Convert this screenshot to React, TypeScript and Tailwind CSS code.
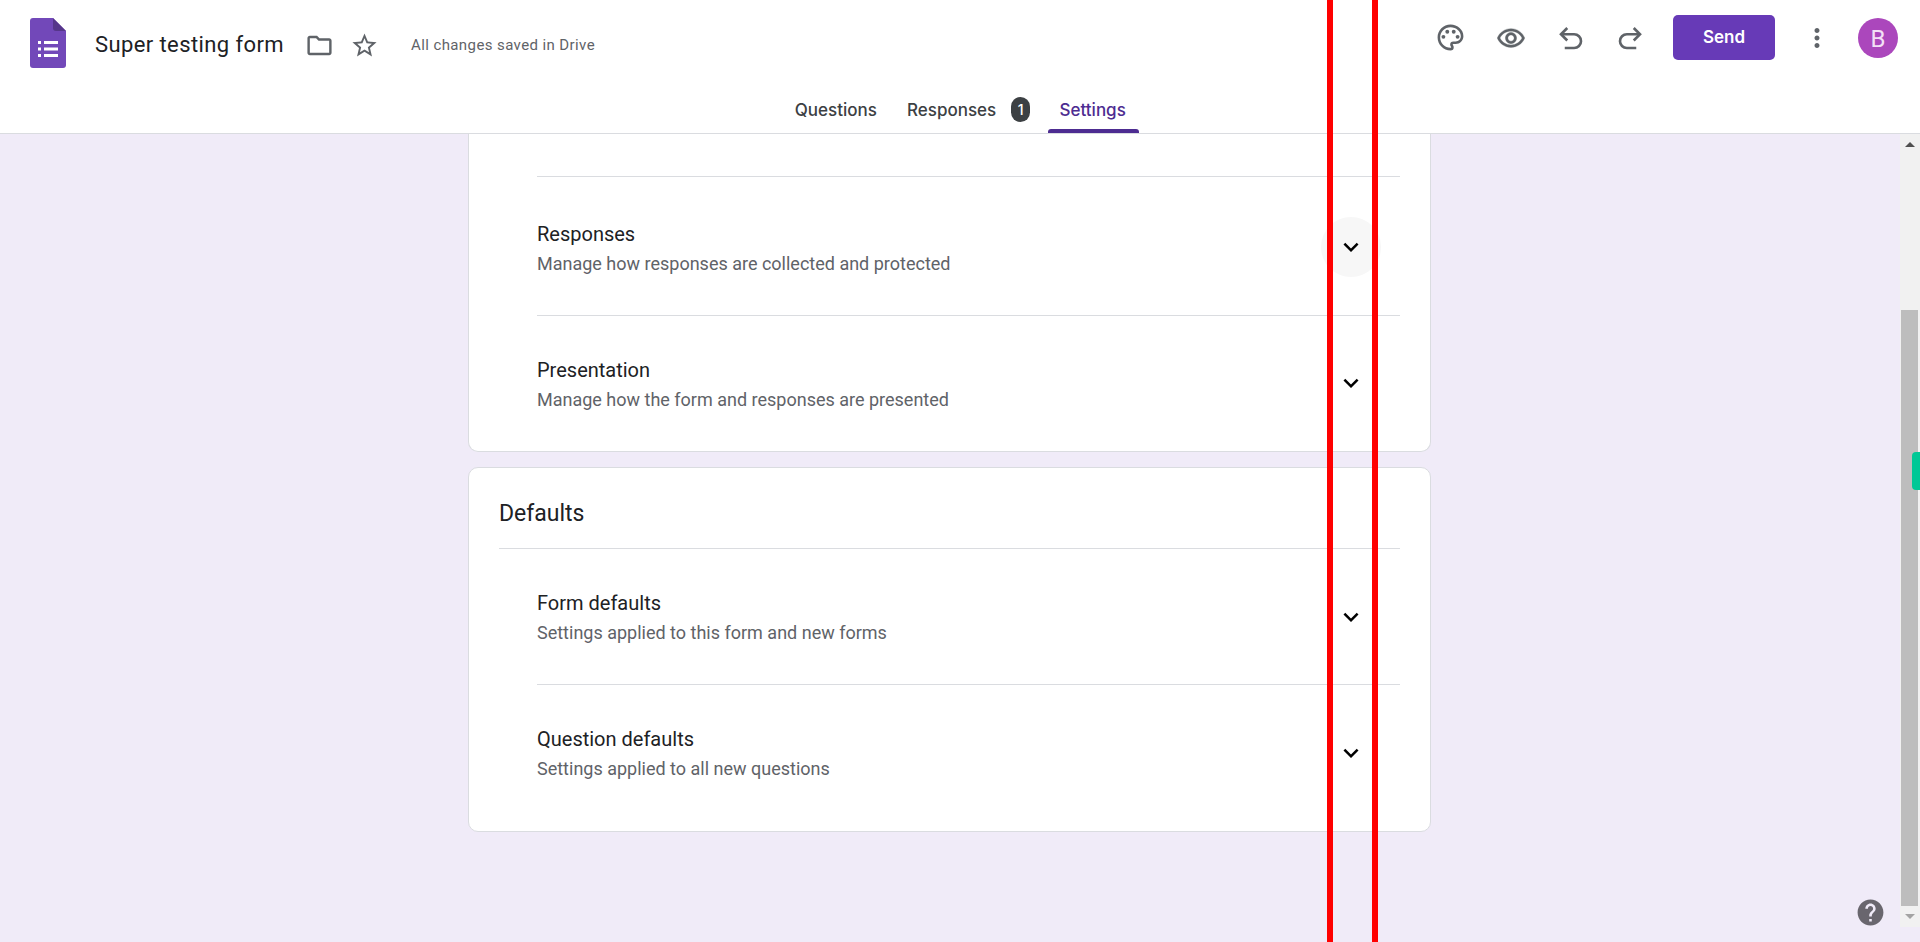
import { MdOutlinePalette, MdMoreVert, MdOutlineFolder, MdStarBorder, MdExpandMore, MdHelp } from "react-icons/md";

function Row({ title, sub, hover, last, rowH, pad, chev }: { title: string; sub: string; hover?: boolean; last?: boolean; rowH: string; pad: string; chev?: string }) {
  return (
    <div className={`ml-[38px] ${rowH} flex items-center ${last ? "" : "border-b border-[#dadce0]"}`}>
      <div className={`flex-1 ${pad}`}>
        <div className="text-[20px] leading-[26px] text-[#202124]">{title}</div>
        <div className="text-[18px] leading-[24px] mt-[5px] text-[#5f6368]">{sub}</div>
      </div>
      <div className={`w-[60px] h-[60px] mr-[19px] rounded-full flex items-center justify-center text-black ${hover ? "bg-[#f7f7f7] mt-[2px]" : ""} ${chev ?? ""}`}>
        <MdExpandMore size={30} />
      </div>
    </div>
  );
}

export default function App() {
  return (
    <div className="relative h-[942px] overflow-hidden flex flex-col bg-[#f0ebf8] font-['Roboto',sans-serif]">
      <header className="h-[134px] shrink-0 bg-white border-b border-[#dadce0] flex flex-col">
        <div className="h-[90px] flex items-center">
          <svg width="36" height="50" viewBox="0 0 36 50" className="ml-[30px] mb-[4px] shrink-0">
            <path d="M3 0H23L36 13V47a3 3 0 0 1-3 3H3a3 3 0 0 1-3-3V3a3 3 0 0 1 3-3Z" fill="#7248b9" />
            <path d="M23 0L36 13H26a3 3 0 0 1-3-3Z" fill="#56368a" />
            <g fill="#fff">
              <rect x="8" y="23" width="3" height="3" />
              <rect x="8" y="29.5" width="3" height="3" />
              <rect x="8" y="36" width="3" height="3" />
              <rect x="14" y="23" width="14" height="3" />
              <rect x="14" y="29.5" width="14" height="3" />
              <rect x="14" y="36" width="14" height="3" />
            </g>
          </svg>
          <div className="ml-[29px] mb-[2px] text-[22px] text-[#202124] tracking-[0.4px]">Super testing form</div>
          <MdOutlineFolder size={29} className="ml-[21px] text-[#5f6368]" />
          <MdStarBorder size={29} className="ml-[16px] text-[#5f6368]" />
          <div className="ml-[32px] text-[15px] tracking-[0.4px] text-[#5f6368]">All changes saved in Drive</div>
          <div className="ml-auto mb-[15px] flex items-center text-[#5f6368]">
            <MdOutlinePalette size={31} />
            <svg width="30" height="30" viewBox="0 0 24 24" fill="currentColor" stroke="currentColor" strokeWidth="0.25" className="ml-[30px]">
              <path d="M12 6.5c3.79 0 7.17 2.13 8.82 5.5-1.65 3.37-5.02 5.5-8.82 5.5S4.83 15.37 3.18 12C4.83 8.63 8.21 6.5 12 6.5m0-2C7 4.5 2.73 7.61 1 12c1.73 4.39 6 7.5 11 7.5s9.27-3.11 11-7.5c-1.73-4.39-6-7.5-11-7.5zm0 5c1.38 0 2.5 1.12 2.5 2.5s-1.12 2.5-2.5 2.5-2.5-1.12-2.5-2.5 1.12-2.5 2.5-2.5m0-2c-2.48 0-4.5 2.02-4.5 4.5s2.02 4.5 4.5 4.5 4.5-2.02 4.5-4.5-2.02-4.5-4.5-4.5z" />
            </svg>
            <svg width="30" height="30" viewBox="0 0 24 24" fill="none" stroke="currentColor" strokeWidth="2.1" className="ml-[30px]">
              <path d="M9 14 4 9l5-5" />
              <path d="M4 9h10.5a5.5 5.5 0 0 1 0 11H7" />
            </svg>
            <svg width="30" height="30" viewBox="0 0 24 24" fill="none" stroke="currentColor" strokeWidth="2.1" className="ml-[29px]">
              <path d="M15 14l5-5-5-5" />
              <path d="M20 9H9.5a5.5 5.5 0 0 0 0 11H17" />
            </svg>
            <div className="ml-[28px] w-[102px] h-[45px] rounded-[5px] bg-[#673ab7] text-white text-[17px] font-semibold flex items-center justify-center font-['Inter',sans-serif]">Send</div>
            <MdMoreVert size={30} className="ml-[27px]" />
            <div className="ml-[26px] mr-[22px] mt-[1px] pt-[2px] w-[40px] h-[40px] rounded-full bg-[#ab47bc] text-[#f3e0f6] text-[24px] flex items-center justify-center">B</div>
          </div>
        </div>
        <div className="flex-1 pl-[14px] flex justify-center items-start text-[17px] font-medium text-[#3c4043] font-['Inter',sans-serif]">
          <div className="mt-[9px] leading-[22px]">Questions</div>
          <div className="mt-[9px] ml-[30px] leading-[22px]">Responses</div>
          <div className="mt-[7px] ml-[15px] w-[19px] h-[25px] rounded-[10px] bg-[#3c4043] text-white text-[14px] flex items-center justify-center">1</div>
          <div className="relative ml-[18px] w-[91px] h-[43px] pt-[9px] pr-[2px] text-center leading-[22px] text-[#4d2c91]">
            Settings
            <div className="absolute left-0 right-0 bottom-0 h-[4px] rounded-t-[3px] bg-[#4d2c91]" />
          </div>
        </div>
      </header>
      <main className="flex-1 flex min-h-0">
        <div className="flex-1 min-w-0 flex flex-col items-center">
          <div className="w-[963px] mr-[1px] h-[318px] shrink-0 bg-white border border-t-0 border-[#dadce0] rounded-b-[10px] pl-[30px] pr-[30px]">
            <div className="h-[43px] ml-[38px] border-b border-[#dadce0]" />
            <Row title="Responses" sub="Manage how responses are collected and protected" hover rowH="h-[139px]" pad="pt-[4px]" />
            <Row title="Presentation" sub="Manage how the form and responses are presented" last rowH="h-[135px]" pad="pt-[1px]" chev="mb-[2px]" />
          </div>
          <div className="w-[963px] mr-[1px] h-[365px] mt-[15px] shrink-0 bg-white border border-[#dadce0] rounded-[10px] pl-[30px] pr-[30px]">
            <div className="h-[81px] pt-[13px] border-b border-[#dadce0] flex items-center text-[23px] text-[#202124]">Defaults</div>
            <Row title="Form defaults" sub="Settings applied to this form and new forms" rowH="h-[136px]" pad="pt-[1px]" />
            <Row title="Question defaults" sub="Settings applied to all new questions" last rowH="h-[136px]" pad="pt-[1px]" />
          </div>
        </div>
        <div className="w-[20px] h-[793px] shrink-0 bg-[#f1f1f1] flex flex-col items-center">
          <div className="h-[20px] shrink-0 flex items-center justify-center">
            <div className="w-0 h-0 border-l-[5px] border-r-[5px] border-b-[5px] border-l-transparent border-r-transparent border-b-[#505050]" />
          </div>
          <div className="w-[17px] mt-[156px] h-[596px] bg-[#bdbdbd] mr-[2px]" />
          <div className="flex-1 flex items-center justify-center">
            <div className="w-0 h-0 border-l-[5px] border-r-[5px] border-t-[5px] border-l-transparent border-r-transparent border-t-[#a3a3a3]" />
          </div>
        </div>
      </main>
      <div className="absolute left-[1327px] top-0 bottom-0 w-[6px] bg-[#ff0000]" />
      <div className="absolute left-[1372px] top-0 bottom-0 w-[6px] bg-[#ff0000]" />
      <div className="absolute left-[1912px] top-[452px] w-[8px] h-[38px] rounded-l-[4px] bg-[#00c896]" />
      <MdHelp size={31} className="absolute left-[1855px] top-[897px] text-[#69666e]" />
    </div>
  );
}
